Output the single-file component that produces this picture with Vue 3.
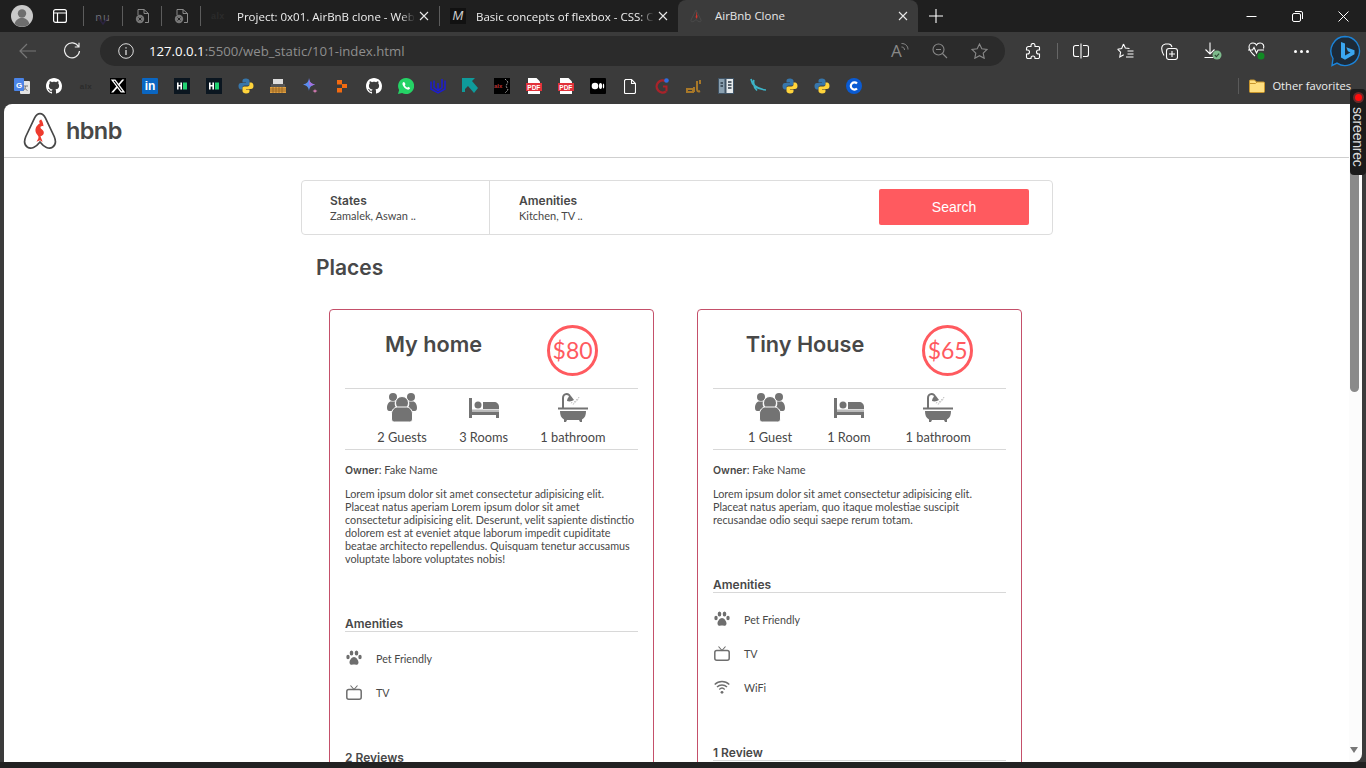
<script setup>
const places = [
  {
    name: 'My home', price: 80, guests: '2 Guests', rooms: '3 Rooms', baths: '1 bathroom',
    desc: 'Lorem ipsum dolor sit amet consectetur adipisicing elit.\nPlaceat natus aperiam Lorem ipsum dolor sit amet\nconsectetur adipisicing elit. Deserunt, velit sapiente distinctio\ndolorem est at eveniet atque laborum impedit cupiditate\nbeatae architecto repellendus. Quisquam tenetur accusamus\nvoluptate labore voluptates nobis!',
    amenities: ['paw', 'tv'], reviews: '2 Reviews'
  },
  {
    name: 'Tiny House', price: 65, guests: '1 Guest', rooms: '1 Room', baths: '1 bathroom',
    desc: 'Lorem ipsum dolor sit amet consectetur adipisicing elit.\nPlaceat natus aperiam, quo itaque molestiae suscipit\nrecusandae odio sequi saepe rerum totam.',
    amenities: ['paw', 'tv', 'wifi'], reviews: '1 Review'
  }
]
const amenityLabel = { paw: 'Pet Friendly', tv: 'TV', wifi: 'WiFi' }
</script>

<template>
  <div class="browser">
    <div class="tabstrip">
      <div class="avatar-slot">
        <svg width="22" height="22" viewBox="0 0 22 22"><circle cx="11" cy="11" r="11" fill="#c9c9c9"/><circle cx="11" cy="8.5" r="4.2" fill="#6e6e6e"/><path d="M3.6 19c1-4.300 4-6 7.400-6s6.400 1.700 7.400 6a11 11 0 0 1-14.800 0z" fill="#6e6e6e"/></svg>
      </div>
      <div class="strip-btn">
        <svg width="14" height="14" viewBox="0 0 14 14" fill="none" stroke="#fff" stroke-width="1.200"><rect x=".6" y=".6" width="12.800" height="12.800" rx="2"/><path d="M.6 4h12.800M4.500 4v9.400"/></svg>
      </div>
      <i class="tab-sep"></i>
      <div class="pin-tab"><span class="nu">nu</span><svg class="nu-v" width="14" height="8" viewBox="0 0 14 8" fill="none" stroke="#2c2440" stroke-width="1.500"><path d="M2 0l5 7 5-7"/></svg></div>
      <i class="tab-sep"></i>
      <div class="pin-tab">
        <svg width="15" height="16" viewBox="0 0 15 16" fill="none" stroke="#8a8a8a" stroke-width="1"><path d="M3 7V1.500h6l4.500 4V14.500H10M9 1.500v4h4.500"/><circle cx="5" cy="11" r="4.200" fill="#777" stroke="none"/><path d="M3.500 9.500l3 3m0-3l-3 3" stroke="#222"/></svg>
      </div>
      <i class="tab-sep"></i>
      <div class="pin-tab">
        <svg width="15" height="16" viewBox="0 0 15 16" fill="none" stroke="#8a8a8a" stroke-width="1"><path d="M3 7V1.500h6l4.500 4V14.500H10M9 1.500v4h4.500"/><circle cx="5" cy="11" r="4.200" fill="#777" stroke="none"/><path d="M3.500 9.500l3 3m0-3l-3 3" stroke="#222"/></svg>
      </div>
      <i class="tab-sep"></i>
      <div class="tab tab-one">
        <span class="alx dim">alx</span>
        <span class="tab-title">Project: 0x01. AirBnB clone - Web</span>
        <span class="tab-x"><svg width="10" height="10" viewBox="0 0 10 10" stroke="#e8e8e8" stroke-width="1.100"><path d="M1 1l8 8M9 1l-8 8"/></svg></span>
      </div>
      <i class="tab-sep"></i>
      <div class="tab tab-two">
        <span class="mdn">M</span>
        <span class="tab-title">Basic concepts of flexbox - CSS: C</span>
        <span class="tab-x"><svg width="10" height="10" viewBox="0 0 10 10" stroke="#e8e8e8" stroke-width="1.100"><path d="M1 1l8 8M9 1l-8 8"/></svg></span>
      </div>
      <div class="tab tab-active">
        <svg class="tab-fav" width="12" height="14" viewBox="0 0 12 14" fill="none"><path d="M6 1L1 11c-.6 2 1.500 3 5-.5 3.500 3.500 5.600 2.500 5 .5z" stroke="#4a4a4a"/><path d="M7 3C5 4 7 6 5.500 8l1.500 2 .5-3L6.500 5z" fill="#d9352c"/></svg>
        <span class="tab-title active-title">AirBnb Clone</span>
        <span class="tab-x"><svg width="10" height="10" viewBox="0 0 10 10" stroke="#e8e8e8" stroke-width="1.100"><path d="M1 1l8 8M9 1l-8 8"/></svg></span>
      </div>
      <div class="new-tab">
        <svg width="14" height="14" viewBox="0 0 14 14" stroke="#fff" stroke-width="1.100"><path d="M7 0v14M0 7h14"/></svg>
      </div>
      <div class="window-btns">
        <span><svg width="11" height="11" viewBox="0 0 11 11" stroke="#fff"><path d="M.5 5.500h10"/></svg></span>
        <span><svg width="11" height="11" viewBox="0 0 11 11" fill="none" stroke="#fff"><rect x=".5" y="2.500" width="8" height="8" rx="1.500"/><path d="M3 .5h6a1.500 1.500 0 0 1 1.500 1.500v6"/></svg></span>
        <span><svg width="11" height="11" viewBox="0 0 11 11" stroke="#fff"><path d="M.5.5l10 10M10.500.5l-10 10"/></svg></span>
      </div>
    </div>

    <div class="toolbar">
      <div class="nav-btn">
        <svg width="18" height="16" viewBox="0 0 18 16" fill="none" stroke="#777" stroke-width="1.200"><path d="M1 8h16M8 1L1 8l7 7"/></svg>
      </div>
      <div class="nav-btn">
        <svg width="18" height="18" viewBox="0 0 18 18" fill="none" stroke="#eee" stroke-width="1.200"><path d="M15.500 4.500A7.500 7.500 0 1 0 16.500 9M16 .8v4.200h-4.200"/></svg>
      </div>
      <div class="omnibox">
        <svg class="omni-info" width="16" height="16" viewBox="0 0 16 16" fill="none" stroke="#ddd"><circle cx="8" cy="8" r="7.300"/><path d="M8 7v5M8 4.200v1.400" stroke-width="1.300"/></svg>
        <span class="url"><b>127.0.0.1</b>:5500/web_static/101-index.html</span>
        <span class="omni-right">
          <span class="read-a">A<svg width="8" height="10" viewBox="0 0 8 10" fill="none" stroke="#888"><path d="M.5 5c2 0 3 1.300 3 3M.5 1.500c4 0 6.500 2.500 6.500 6"/></svg></span>
          <svg width="16" height="16" viewBox="0 0 16 16" fill="none" stroke="#888" stroke-width="1.100"><circle cx="6.500" cy="6.500" r="5.500"/><path d="M10.500 10.500L15 15M4 6.500h5"/></svg>
          <svg width="17" height="16" viewBox="0 0 17 16" fill="none" stroke="#888" stroke-width="1.100"><path d="M8.500 1l2.300 4.800 5.200.7-3.800 3.600 1 5.200-4.700-2.600-4.700 2.600 1-5.200L1 6.500l5.200-.7z"/></svg>
        </span>
      </div>
      <div class="tools">
        <span class="tool tool-ext"><svg width="16" height="17" viewBox="0 0 16 17" fill="none" stroke="#fff" stroke-width="1.100"><path d="M6 2.500a2 2 0 0 1 4 0V3.500h3.500a1 1 0 0 1 1 1V7h-1a2 2 0 0 0 0 4h1v3a1.500 1.500 0 0 1-1.500 1.500H10V15a2 2 0 0 0-4 0v.5H3A1.500 1.500 0 0 1 1.500 14v-3h1a2 2 0 0 0 0-4h-1V5.500a2 2 0 0 1 2-2H6z"/></svg></span>
        <i class="tool-sep"></i>
        <span class="tool tool-split"><svg width="16" height="16" viewBox="0 0 16 16" fill="none" stroke="#fff" stroke-width="1.100"><path d="M6 2.500H2.500a2 2 0 0 0-2 2v7a2 2 0 0 0 2 2H6M10 2.500h3.500a2 2 0 0 1 2 2v7a2 2 0 0 1-2 2H10M8 .5v15"/></svg></span>
        <span class="tool tool-fav"><svg width="17" height="16" viewBox="0 0 17 16" fill="none" stroke="#fff" stroke-width="1.100"><path d="M6.500 1l1.800 4 4.200.5M.6 6.200l4.100-.7L6.500 1M.6 6.200l3 3-.8 4.800 3.900-2.300M10.500 8h6M10.500 11h6M9 14h7.500"/></svg></span>
        <span class="tool tool-coll"><svg width="17" height="17" viewBox="0 0 17 17" fill="none" stroke="#fff" stroke-width="1.100"><rect x="5.500" y="5.500" width="11" height="11" rx="2.500"/><path d="M11 8v6M8 11h6M3 12.500C1.500 10.500.8 8.500.7 5.500c0-2.500 1.500-4 3.800-4.500h3c1.500 0 3 1 3.500 3"/></svg></span>
        <span class="tool tool-dl"><svg width="18" height="18" viewBox="0 0 18 18" fill="none" stroke="#fff" stroke-width="1.100"><path d="M6 .5v11M1.500 7.500L6 12l4.500-4.500M.5 15.500h9"/><circle cx="13" cy="13" r="4.500" fill="#7dbb8c" stroke="none"/><path d="M10.800 13l1.600 1.600 2.700-2.900" stroke="#2d4a34"/></svg></span>
        <span class="tool tool-health"><svg width="18" height="18" viewBox="0 0 18 18" fill="none" stroke="#fff" stroke-width="1.100"><path d="M5 1C2.500 1 1 3 1 5c0 3 3 6.500 6 9M5 1c1.800 0 3 1 3.500 2C9 2 10.500 1 12 1c3 0 4.500 2.500 3.500 5.500M0 8h4.500l1.500-2.500L8.500 11l1.500-3h6"/><circle cx="13" cy="14" r="3.500" fill="#118a24" stroke="none"/></svg></span>
        <span class="tool tool-more"><i></i><i></i><i></i></span>
      </div>
      <span class="bing"><svg width="32" height="32" viewBox="0 0 32 32" fill="none"><path d="M16 1.500a14.500 14.500 0 1 1-8 26.600L3 30.500l1-7A14.500 14.500 0 0 1 16 1.500z" stroke="#1b83d8" stroke-width="1.400" fill="#1c2a38"/><path d="M12 7l4 1.500v12l5.500-3-2.600-1.300-1.600-3.900 8.200 2.900v4l-9.500 5.500L12 22.500z" fill="#3aa6f0"/></svg></span>
    </div>

    <div class="bookmarks">
      <span class="fav"><svg width="16" height="16" viewBox="0 0 16 16"><rect x="6" y="3" width="10" height="13" rx="1" fill="#e3e3e3"/><rect width="10" height="13" rx="1" fill="#4a84e8"/><text x="2" y="10" class="svg-g">G</text><path d="M9.500 8h4.500M11.500 8c0 2-1 3.500-2 4.500M10.500 10c1 1 2 2 3 2.500" stroke="#777" fill="none"/></svg></span>
      <span class="fav"><svg width="16" height="16" viewBox="0 0 16 16"><path fill="#fff" d="M8 0C3.580 0 0 3.580 0 8c0 3.540 2.290 6.530 5.470 7.590.4.070.55-.17.55-.38 0-.19-.01-.82-.01-1.490-2.010.37-2.530-.49-2.690-.94-.09-.23-.48-.94-.82-1.130-.28-.15-.68-.52-.01-.53.63-.01 1.080.58 1.230.82.72 1.210 1.870.87 2.330.66.07-.52.28-.87.51-1.070-1.780-.2-3.640-.89-3.640-3.950 0-.87.31-1.590.82-2.150-.08-.2-.36-1.020.08-2.120 0 0 .67-.21 2.200.82.640-.18 1.320-.27 2-.27.68 0 1.360.09 2 .27 1.530-1.040 2.200-.82 2.200-.82.440 1.100.160 1.920.080 2.120.51.560.82 1.270.82 2.150 0 3.070-1.870 3.750-3.650 3.950.29.250.54.730.54 1.480 0 1.070-.01 1.930-.01 2.200 0 .21.150.46.55.38A8.013 8.013 0 0 0 16 8c0-4.420-3.580-8-8-8z"/></svg></span>
      <span class="fav"><span class="alx">alx</span></span>
      <span class="fav"><svg width="16" height="16" viewBox="0 0 24 24"><rect width="24" height="24" fill="#000"/><path fill="#fff" d="M18.244 2.250h3.308l-7.227 8.260 8.502 11.240H16.170l-5.214-6.817L4.990 21.750H1.680l7.730-8.835L1.254 2.250H8.080l4.713 6.231zm-1.161 17.520h1.833L7.084 4.126H5.117z"/></svg></span>
      <span class="fav"><span class="brand-li">in</span></span>
      <span class="fav"><svg width="16" height="16" viewBox="0 0 16 16"><rect width="16" height="16" fill="#0b1620"/><path d="M3 4.500h1.600v2.500h1.800V4.500H8v7H6.400V8.500H4.600v3H3z" fill="#fff"/><rect x="9" y="4.500" width="4" height="7" fill="#22d172"/></svg></span>
      <span class="fav"><svg width="16" height="16" viewBox="0 0 16 16"><rect width="16" height="16" fill="#0b1620"/><path d="M3 4.500h1.600v2.500h1.800V4.500H8v7H6.400V8.500H4.600v3H3z" fill="#fff"/><rect x="9" y="4.500" width="4" height="7" fill="#22d172"/></svg></span>
      <span class="fav"><svg width="16" height="16" viewBox="0 0 16 16"><path d="M8 .5C5 .5 4.500 1.500 4.500 3v1.500H8V5H3C1.500 5 .5 6 .5 8s1 3.500 2.500 3.500h1.500V9.500c0-1.200 1-2 2-2h3.500c1 0 1.500-.8 1.500-1.800V3c0-1.500-1.500-2.500-3.500-2.500z" fill="#3776ab"/><path d="M8 15.500c3 0 3.500-1 3.500-2.500v-1.500H8V11h5c1.500 0 2.500-1 2.500-3S14.500 4.500 13 4.500h-1.500v2c0 1.200-1 2-2 2H6c-1 0-1.500.8-1.500 1.800V13c0 1.500 1.500 2.500 3.500 2.500z" fill="#ffd43b"/></svg></span>
      <span class="fav"><svg width="16" height="16" viewBox="0 0 16 16"><rect x="3" y="1" width="10" height="5" fill="#ddd"/><path d="M1 6h14v3H1z" fill="#555"/><path d="M0 9h16v6H0z" fill="#e0a040"/><path d="M0 11h16M0 13h16M3 9v6M6 9v6M9 9v6M12 9v6" stroke="#8a5a20" stroke-width=".7"/></svg></span>
      <span class="fav"><svg width="16" height="16" viewBox="0 0 16 16"><path d="M7 0c.5 4 1.800 5.500 6 6.500C9 7.500 7.500 9 7 13 6.500 9 5 7.500 1 6.500 5 5.500 6.500 4 7 0z" fill="#5b8cee"/><path d="M7 0c.5 4 1.800 5.500 6 6.500C9 7.500 7.500 9 7 6.500z" fill="#a66fdc"/><path d="M13 10.500c.2 1.500.8 2 2.500 2.500-1.700.5-2.300 1-2.500 2.500-.2-1.500-.8-2-2.500-2.500 1.700-.5 2.300-1 2.500-2.500z" fill="#d07ab0"/></svg></span>
      <span class="fav"><svg width="16" height="16" viewBox="0 0 16 16"><rect x="3" y="2" width="5" height="4.500" fill="#f36a10"/><rect x="8" y="6" width="5" height="4" fill="#f36a10"/><rect x="3" y="10" width="5" height="4.500" fill="#f36a10"/></svg></span>
      <span class="fav"><svg width="16" height="16" viewBox="0 0 16 16"><path fill="#fff" d="M8 0C3.580 0 0 3.580 0 8c0 3.540 2.290 6.530 5.470 7.590.4.070.55-.17.55-.38 0-.19-.01-.82-.01-1.490-2.010.37-2.530-.49-2.690-.94-.09-.23-.48-.94-.82-1.130-.28-.15-.68-.52-.01-.53.63-.01 1.080.58 1.230.82.72 1.210 1.870.87 2.330.66.07-.52.28-.87.51-1.070-1.780-.2-3.640-.89-3.640-3.950 0-.87.31-1.590.82-2.150-.08-.2-.36-1.020.08-2.120 0 0 .67-.21 2.200.82.640-.18 1.320-.27 2-.27.68 0 1.360.09 2 .27 1.530-1.040 2.200-.82 2.200-.82.440 1.100.160 1.920.080 2.120.51.560.82 1.270.82 2.150 0 3.070-1.870 3.750-3.650 3.950.29.250.54.730.54 1.480 0 1.070-.01 1.930-.01 2.200 0 .21.150.46.55.38A8.013 8.013 0 0 0 16 8c0-4.420-3.580-8-8-8z"/></svg></span>
      <span class="fav"><svg width="16" height="16" viewBox="0 0 16 16"><path d="M8 0a8 8 0 0 0-6.900 12L0 16l4.100-1.100A8 8 0 1 0 8 0z" fill="#25d366"/><path d="M5.500 4c-1 .5-1.300 1.500-.8 3 .6 1.800 2.500 3.800 4.500 4.500 1.300.4 2.300 0 2.800-1l-.1-.8-1.800-.9-.8.900c-1-.4-2-1.400-2.500-2.500l.7-.9-.8-1.900z" fill="#fff"/></svg></span>
      <span class="fav"><svg width="16" height="16" viewBox="0 0 16 16" fill="none" stroke="#1c1ccf" stroke-width="1.500"><path d="M4 2.500v7l4 3 4-3v-8.500M1 3.500v7.500l7 4 7-4V2.500M8 12.500V5"/></svg></span>
      <span class="fav"><svg width="16" height="16" viewBox="0 0 16 16"><path d="M0 0h13L10 3l6 7-4 5-6-7-3 3v3H0z" fill="#0f9b9b"/></svg></span>
      <span class="fav"><svg width="16" height="16" viewBox="0 0 16 16"><rect width="16" height="16" fill="#000"/><text x="0" y="10" class="svg-alx">alx</text><path d="M11 1l3 3-2 4 2 4-3 3" stroke="#999" fill="none" stroke-dasharray="2 1"/></svg></span>
      <span class="fav"><svg width="16" height="16" viewBox="0 0 16 16"><path d="M2 0h8.500L14 3.500V16H2z" fill="#fff"/><rect y="5" width="16" height="8" fill="#e2313a"/><text x="1.300" y="11.500" class="svg-pdf">PDF</text></svg></span>
      <span class="fav"><svg width="16" height="16" viewBox="0 0 16 16"><path d="M2 0h8.500L14 3.500V16H2z" fill="#fff"/><rect y="5" width="16" height="8" fill="#e2313a"/><text x="1.300" y="11.500" class="svg-pdf">PDF</text></svg></span>
      <span class="fav"><svg width="16" height="16" viewBox="0 0 16 16"><rect width="16" height="16" rx="1" fill="#000"/><circle cx="5" cy="8" r="3.300" fill="#fff"/><ellipse cx="10.500" cy="8" rx="1.600" ry="3" fill="#fff"/><ellipse cx="13.500" cy="8" rx=".7" ry="2.600" fill="#fff"/></svg></span>
      <span class="fav"><svg width="12" height="15" viewBox="0 0 12 15" fill="none" stroke="#fff" stroke-width="1.100"><path d="M1.500.5h6l4 4V13a1.500 1.500 0 0 1-1 1.500h-9a1 1 0 0 1-1-1V1.500zM7.500.5v4h4"/></svg></span>
      <span class="fav"><svg width="16" height="16" viewBox="0 0 16 16" fill="none"><path d="M12 13.500A6 6 0 1 1 12 3.500" stroke="#a8232a" stroke-width="2.400"/><path d="M9 8.500h3.500v5" stroke="#a8232a" stroke-width="2"/><circle cx="12.500" cy="2.500" r="2.300" fill="#2f6de0"/></svg></span>
      <span class="fav"><svg width="16" height="16" viewBox="0 0 16 16" fill="none" stroke="#a87828" stroke-width="2"><path d="M1 11h6v3H1zM8 9v5M11 3v8c0 2 1 3 3 2M14 2v4"/></svg></span>
      <span class="fav"><svg width="16" height="16" viewBox="0 0 16 16"><rect width="16" height="16" fill="#405364"/><rect x="1" y="1" width="5.500" height="14" fill="#8aa0b0"/><rect x="8.500" y="1" width="6.500" height="14" fill="#e6eaec"/><path d="M2.500 5h2.500M2.500 8h2.500M10 4h3.500M10 7h3.500M10 10h3.500" stroke="#2c3a45" stroke-width="1.300"/></svg></span>
      <span class="fav"><svg width="16" height="16" viewBox="0 0 16 16" fill="none" stroke="#3cb4c8" stroke-width="1.700"><path d="M1 1c1 6 5 10 15 11M4 2c-1 2-.5 3.500.5 5.500M4 7c0 2 1 3.500 3 5.500"/></svg></span>
      <span class="fav"><svg width="16" height="16" viewBox="0 0 16 16"><path d="M8 .5C5 .5 4.500 1.500 4.500 3v1.500H8V5H3C1.500 5 .5 6 .5 8s1 3.500 2.500 3.500h1.500V9.500c0-1.200 1-2 2-2h3.500c1 0 1.500-.8 1.500-1.800V3c0-1.500-1.500-2.500-3.500-2.500z" fill="#3776ab"/><path d="M8 15.500c3 0 3.500-1 3.500-2.500v-1.500H8V11h5c1.500 0 2.500-1 2.500-3S14.500 4.500 13 4.500h-1.500v2c0 1.200-1 2-2 2H6c-1 0-1.500.8-1.500 1.800V13c0 1.500 1.500 2.500 3.500 2.500z" fill="#ffd43b"/></svg></span>
      <span class="fav"><svg width="16" height="16" viewBox="0 0 16 16"><path d="M8 .5C5 .5 4.500 1.500 4.500 3v1.500H8V5H3C1.500 5 .5 6 .5 8s1 3.500 2.500 3.500h1.500V9.500c0-1.200 1-2 2-2h3.500c1 0 1.500-.8 1.500-1.800V3c0-1.500-1.500-2.500-3.500-2.500z" fill="#3776ab"/><path d="M8 15.500c3 0 3.500-1 3.500-2.500v-1.500H8V11h5c1.500 0 2.500-1 2.500-3S14.500 4.500 13 4.500h-1.500v2c0 1.200-1 2-2 2H6c-1 0-1.500.8-1.500 1.800V13c0 1.500 1.500 2.500 3.500 2.500z" fill="#ffd43b"/></svg></span>
      <span class="fav"><svg width="16" height="16" viewBox="0 0 16 16" fill="none"><circle cx="8" cy="8" r="8" fill="#0a5bd3"/><path d="M11 5.500a3.600 3.600 0 1 0 0 5" stroke="#fff" stroke-width="2.200"/></svg></span>
      <span class="fav-spacer"></span>
      <i class="bm-sep"></i>
      <svg class="bm-folder" width="16" height="14" viewBox="0 0 16 14"><path d="M.5 2a1 1 0 0 1 1-1h4l2 2h7a1 1 0 0 1 1 1v8.500a1 1 0 0 1-1 1h-13a1 1 0 0 1-1-1z" fill="#ffdf80" stroke="#c9962c"/><path d="M.5 4.500h6l1.500-1.500" fill="none" stroke="#c9962c"/></svg>
      <span class="bm-other">Other favorites</span>
    </div>

    <div class="viewport">
      <main class="page">
        <header class="site-header">
          <svg class="logo" width="34" height="38" viewBox="0 0 34 38" fill="none">
            <path d="M17 1.700c-2.500 0-4 1.500-5.500 4.500L2.800 24.500c-2 4.800-1.300 8.800 1.700 10.700 3.500 2.300 8.500 0 12.500-5.200 4 5.200 9 7.500 12.500 5.200 3-1.900 3.700-5.900 1.700-10.700L22.500 6.200C21 3.200 19.500 1.700 17 1.700z" stroke="#484848" stroke-width="1.700"/>
            <path d="M18.500 7.500c-2.500.5-3 2.500-1.500 3.700-2.500 1.500-4.800 4-4.500 8 .3 2.800 2.500 3.500 3 5.500.2 1.500-.8 3-2 5l3.500-1.500 2.500 1.800c-.4-2.500-1.500-4-2-5.800 2.500-.5 4-2.500 3-5-1-2-3.200-2.200-3-4.500 1-.7 2-.7 3-.5-.3-2.500-.8-4.800-2-6.200z" fill="#ee3b2e"/>
          </svg>
          <span class="wordmark">hbnb</span>
        </header>

        <section class="filters">
          <div class="filter states">
            <h3>States</h3>
            <p>Zamalek, Aswan ..</p>
          </div>
          <div class="filter amenities-filter">
            <h3>Amenities</h3>
            <p>Kitchen, TV ..</p>
          </div>
          <button class="search" type="button">Search</button>
        </section>

        <section class="places">
          <h1>Places</h1>
          <div class="cards">
            <article v-for="p in places" :key="p.name" class="card">
              <div class="card-top">
                <h2>{{ p.name }}</h2>
                <div class="price">${{ p.price }}</div>
              </div>
              <div class="info">
                <div class="info-item">
                  <svg width="30" height="29" viewBox="0 0 30 29" fill="#737373">
                    <circle cx="6" cy="4" r="4"/><circle cx="24" cy="4" r="4"/>
                    <path d="M0 15c0-4 2-6.500 4-6.500h4c-.5 2-.5 4 1 6-2 1-3.500 2.500-4 3.500H2c-1 0-2-1-2-3zM30 15c0-4-2-6.500-4-6.500h-4c.5 2 .5 4-1 6 2 1 3.500 2.500 4 3.500h3c1 0 2-1 2-3z"/>
                    <circle cx="15" cy="10" r="6.500" stroke="#fff"/>
                    <path d="M4.500 21c0-4 3-7 6-7h9c3 0 6 3 6 7v5c0 2-1.500 3-3 3h-15c-1.500 0-3-1-3-3z" stroke="#fff"/>
                  </svg>
                  <span>{{ p.guests }}</span>
                </div>
                <div class="info-item">
                  <svg width="30" height="29" viewBox="0 0 30 29" fill="#737373">
                    <path d="M0 5h3v13.500h27V25h-3v-3H3v3H0z"/><circle cx="9" cy="12" r="3.500"/><path d="M14 9h11c3 0 5 2 5 5v2H14z"/>
                    <rect x="3" y="16.500" width="27" height="2" fill="#bbb"/>
                  </svg>
                  <span>{{ p.rooms }}</span>
                </div>
                <div class="info-item">
                  <svg width="30" height="29" viewBox="0 0 30 29" fill="none">
                    <path d="M5 15V5c0-2 1.500-4 3.500-4S12 2.500 12 4" stroke="#737373" stroke-width="2"/>
                    <path d="M9 8c0-3 2-5 4-5l3 4c-2 1-4 2-7 1z" fill="#737373"/>
                    <path d="M14 9l-1 2M17 8l-2 4M19 6l-2 4M21 4l-2 4" stroke="#bbb" stroke-dasharray="1.500 1"/>
                    <rect y="14.500" width="30" height="2" fill="#737373"/>
                    <path d="M2 18h26c0 4-1 7-4 8.500V29h-2l-1-2H9l-1 2H6v-2.500C3 25 2 22 2 18z" fill="#737373"/>
                  </svg>
                  <span>{{ p.baths }}</span>
                </div>
              </div>
              <p class="owner"><b>Owner</b>: Fake Name</p>
              <p class="desc">{{ p.desc }}</p>
              <h4 class="section-title">Amenities</h4>
              <ul class="amenity-list">
                <li v-for="a in p.amenities" :key="a">
                  <span class="amenity-icon">
                    <svg v-if="a === 'paw'" width="16" height="16" viewBox="0 0 16 16" fill="#6e6e6e">
                      <ellipse cx="2" cy="7" rx="1.700" ry="2.300"/><ellipse cx="14" cy="7" rx="1.700" ry="2.300"/><ellipse cx="5.500" cy="3" rx="1.800" ry="2.600"/><ellipse cx="10.500" cy="3" rx="1.800" ry="2.600"/>
                      <path d="M8 7c-2 0-4.500 3-4.500 5.500 0 2 1.500 2.500 2.500 2.300 1.300-.3 2.700-.3 4 0 1 .2 2.500-.3 2.500-2.300C12.500 10 10 7 8 7z"/>
                    </svg>
                    <svg v-else-if="a === 'tv'" width="16" height="15" viewBox="0 0 16 15" fill="none" stroke="#6e6e6e" stroke-width="1.500">
                      <rect x=".8" y="4.500" width="14.400" height="9.700" rx="2"/><path d="M4.500.5L8 4.500 11.500.5" stroke-width="1.100"/>
                    </svg>
                    <svg v-else width="16" height="14" viewBox="0 0 16 14" fill="none" stroke="#6e6e6e" stroke-width="1.400">
                      <path d="M.7 4.500a10.500 10.500 0 0 1 14.600 0M3 7a7.200 7.200 0 0 1 10 0M5.300 9.400a3.900 3.900 0 0 1 5.400 0"/><circle cx="8" cy="12.300" r="1.400" fill="#6e6e6e" stroke="none"/>
                    </svg>
                  </span>
                  <span>{{ amenityLabel[a] }}</span>
                </li>
              </ul>
              <h4 class="section-title reviews">{{ p.reviews }}</h4>
            </article>
          </div>
        </section>
      </main>
      <div class="scrollbar">
        <span class="thumb"></span>
        <span class="arrow-down"></span>
      </div>
      <aside class="screenrec">
        <span class="rec-dot"></span>
        <span class="rec-label">screenrec</span>
      </aside>
    </div>
    <div class="bottom-edge"></div>
  </div>
</template>

<style>
html, body { margin: 0; padding: 0; overflow: hidden; background: #3b3b3b; }
</style>

<style scoped>
* { box-sizing: border-box; }
.browser {
  width: 1366px; height: 768px; display: flex; flex-direction: column;
  background: #3b3b3b; overflow: hidden;
  font-family: "Open Sans", "Noto Sans", sans-serif;
}

/* tab strip */
.tabstrip { height: 32px; flex: none; display: flex; align-items: center; background: #1f1f1f; color: #eee; font-size: 11.500px; }
.avatar-slot { width: 44px; display: flex; justify-content: center; }
.strip-btn { width: 32px; margin-right: 7px; display: flex; justify-content: center; }
.tab-sep { width: 1px; height: 20px; background: #5c5c5c; flex: none; }
.pin-tab { width: 38px; height: 32px; flex: none; display: flex; justify-content: center; align-items: center; position: relative; }
.nu { color: #6f6f78; font-size: 11px; letter-spacing: 1px; }
.nu-v { position: absolute; left: 12px; top: 17px; }
.tab { height: 32px; display: flex; align-items: center; flex: none; position: relative; }
.tab-one { width: 238px; padding-left: 10px; }
.tab-two { width: 238px; padding-left: 10px; }
.tab-active { width: 240px; padding-left: 12px; background: #3b3b3b; border-radius: 8px 8px 0 0; }
.alx { font: 700 9px "Liberation Sans", sans-serif; color: #2b2b2b; letter-spacing: .4px; }
.alx.dim { width: 26px; }
.mdn { width: 16px; height: 16px; margin-right: 10px; background: #111; color: #ccc; font: italic 400 13px/16px "Liberation Sans", sans-serif; text-align: center; }
.tab-title { width: 178px; white-space: nowrap; overflow: hidden; -webkit-mask-image: linear-gradient(90deg, #000 92%, transparent); mask-image: linear-gradient(90deg, #000 92%, transparent); }
.tab-active .tab-title { -webkit-mask-image: none; mask-image: none; color: #e6e6e6; margin-top: -1px; }
.tab-fav { margin-right: 13px; }
.tab-x { position: absolute; right: 10px; top: 11px; display: flex; }
.new-tab { width: 36px; display: flex; justify-content: center; }
.window-btns { margin-left: auto; display: flex; }
.window-btns span { width: 46px; display: flex; justify-content: center; }

/* toolbar */
.toolbar { height: 38px; flex: none; display: flex; align-items: center; }
.nav-btn { width: 44px; flex: none; display: flex; justify-content: center; }
.nav-btn:first-child { margin-left: 6px; }
.omnibox { width: 905px; flex: none; margin-left: 6px; height: 30px; background: #2b2b2b; border-radius: 15px; display: flex; align-items: center; padding-left: 18px; padding-right: 17px; color: #8e8e8e; font-size: 13.200px; }
.omni-info { margin-right: 15px; }
.url b { color: #fff; font-weight: 400; }
.omni-right { margin-left: auto; display: flex; align-items: center; gap: 23px; }
.read-a { font-size: 17px; line-height: 20px; color: #888; display: flex; width: 18px; }
.read-a svg { margin-top: 1px; margin-left: -1px; }
.tools { display: flex; align-items: center; flex: none; margin-left: 20px; }
.tool { width: 44px; flex: none; display: flex; justify-content: center; align-items: center; }
.tool-ext { width: 16px; margin-right: 16px; }
.tool-sep { width: 1px; height: 16px; background: #666; margin-right: 1px; }
.tool-more { gap: 3px; }
.tool-more i { width: 3px; height: 3px; background: #fff; border-radius: 50%; }
.bing { margin-left: 6px; display: flex; flex: none; }

/* bookmarks */
.bookmarks { height: 34px; flex: none; display: flex; align-items: center; padding: 0 15px 2px 6px; color: #eee; }
.fav { width: 32px; height: 20px; flex: none; display: flex; align-items: center; justify-content: center; }
.fav .alx { font-size: 8px; }
.brand-li { width: 16px; height: 16px; background: #0a66c2; color: #fff; font: 700 12px/16px "Liberation Sans", sans-serif; text-align: center; border-radius: 1px; }
.fav-spacer { flex: 1; }
.bm-sep { width: 1px; height: 16px; background: #5a5a5a; margin-right: 10px; }
.bm-folder { margin-right: 7px; }
.bm-other { font-size: 11.200px; white-space: nowrap; margin-top: -1px; }
.svg-g { font: 700 8px "Liberation Sans", sans-serif; fill: #fff; }
.svg-alx { font: 700 6px "Liberation Sans", sans-serif; fill: #b33; }
.svg-pdf { font: 700 6.500px "Liberation Sans", sans-serif; fill: #fff; }

/* viewport */
.viewport { flex: 1; min-height: 0; position: relative; display: flex; padding: 0 4px; }
.page { width: 1345px; flex: none; height: 100%; overflow: hidden; background: #fff; border-radius: 8px 0 0 0; color: #484848; font-family: Lato, "Open Sans", sans-serif; }
.site-header { height: 54px; border-bottom: 1px solid #cfcfcf; display: flex; align-items: center; padding-left: 19px; }
.logo { margin-right: 9px; }
.wordmark { font-family: Inter, sans-serif; font-size: 23.500px; font-weight: 600; letter-spacing: -.6px; color: #484848; }

.filters { width: 752px; height: 55px; margin: 22px 0 0 297px; border: 1px solid #ddd; border-radius: 4px; display: flex; align-items: center; }
.filter { align-self: stretch; padding-top: 13px; }
.filter h3 { margin: 0; font: 600 12px/14px Inter, sans-serif; color: #484848; }
.filter p { margin: 1px 0 0; font-size: 11px; line-height: 14px; color: #484848; }
.states { width: 188px; padding-left: 28px; border-right: 1px solid #ddd; }
.amenities-filter { padding-left: 29px; }
.search { margin-left: auto; margin-right: 23px; margin-top: -1px; width: 150px; height: 36px; border: 0; border-radius: 2px; background: #ff5a5f; color: #fff; font: 14px "Liberation Sans", Arial, sans-serif; }

.places { margin-left: 312px; width: 720px; }
.places h1 { margin: 20px 0 0; font: 600 21px/25px Inter, sans-serif; color: #484848; }
.cards { display: flex; gap: 43px; margin: 29px 0 0 13px; }
.card { width: 325px; flex: none; border: 1px solid #c4506a; border-radius: 4px; padding: 15px 15px 0; height: 620px; }
.card-top { height: 63px; display: flex; justify-content: space-evenly; }
.card-top h2 { margin: 3px 25px 0 0; font: 600 21.700px/32px Inter, sans-serif; color: #484848; white-space: nowrap; }
.price { width: 51px; height: 51px; border: 3px solid #ff5a5f; border-radius: 50%; color: #ff5a5f; font-size: 23px; line-height: 45px; text-align: center; }
.info { border-top: 1px solid #d8d8d8; border-bottom: 1px solid #d8d8d8; height: 62px; display: flex; justify-content: space-evenly; padding-top: 4px; }
.info-item { display: flex; flex-direction: column; align-items: center; gap: 7px; font-size: 12.800px; line-height: 16px; }
.owner { margin: 13px 0 0; font-size: 11px; line-height: 14px; }
.owner b { font: 600 10.500px Inter, sans-serif; }
.desc { margin: 10px 0 0; font-size: 10.800px; line-height: 13px; white-space: pre; }
.section-title { margin: 52px 0 0; font: 600 12px/14px Inter, sans-serif; border-bottom: 1px solid #d8d8d8; color: #484848; }
.amenity-list { list-style: none; margin: 9px 0 0; padding: 0; }
.amenity-list li { height: 34px; display: flex; align-items: center; font-size: 10.700px; }
.amenity-icon { width: 31px; padding-left: 1px; display: flex; align-items: center; }
.section-title.reviews { margin-top: 42px; }

.scrollbar { width: 13px; flex: none; height: 100%; background: #fcfcfc; position: relative; border-radius: 0 0 8px 0; }
.thumb { position: absolute; left: 1px; top: 25px; width: 9px; height: 263px; background: #8a8a8a; border-radius: 0 0 5px 5px; }
.arrow-down { position: absolute; bottom: 9px; left: 1px; width: 0; height: 0; border-left: 4.500px solid transparent; border-right: 4.500px solid transparent; border-top: 6px solid #777; }
.screenrec { position: absolute; top: -15px; left: 1350px; width: 16px; height: 86px; background: #1b1b1b; border-radius: 4px; display: flex; flex-direction: column; align-items: center; padding-top: 4px; overflow: hidden; }
.rec-dot { width: 7px; height: 7px; margin: 1px 0; border-radius: 50%; background: #ff0c0c; box-shadow: 0 0 0 2px #6a2a2a; flex: none; }
.rec-label { writing-mode: vertical-rl; font: 14px/16px "Liberation Sans", sans-serif; letter-spacing: -.2px; color: #dcdcdc; margin-top: 5px; white-space: nowrap; }
.bottom-edge { height: 6px; flex: none; background: #222; }
</style>
